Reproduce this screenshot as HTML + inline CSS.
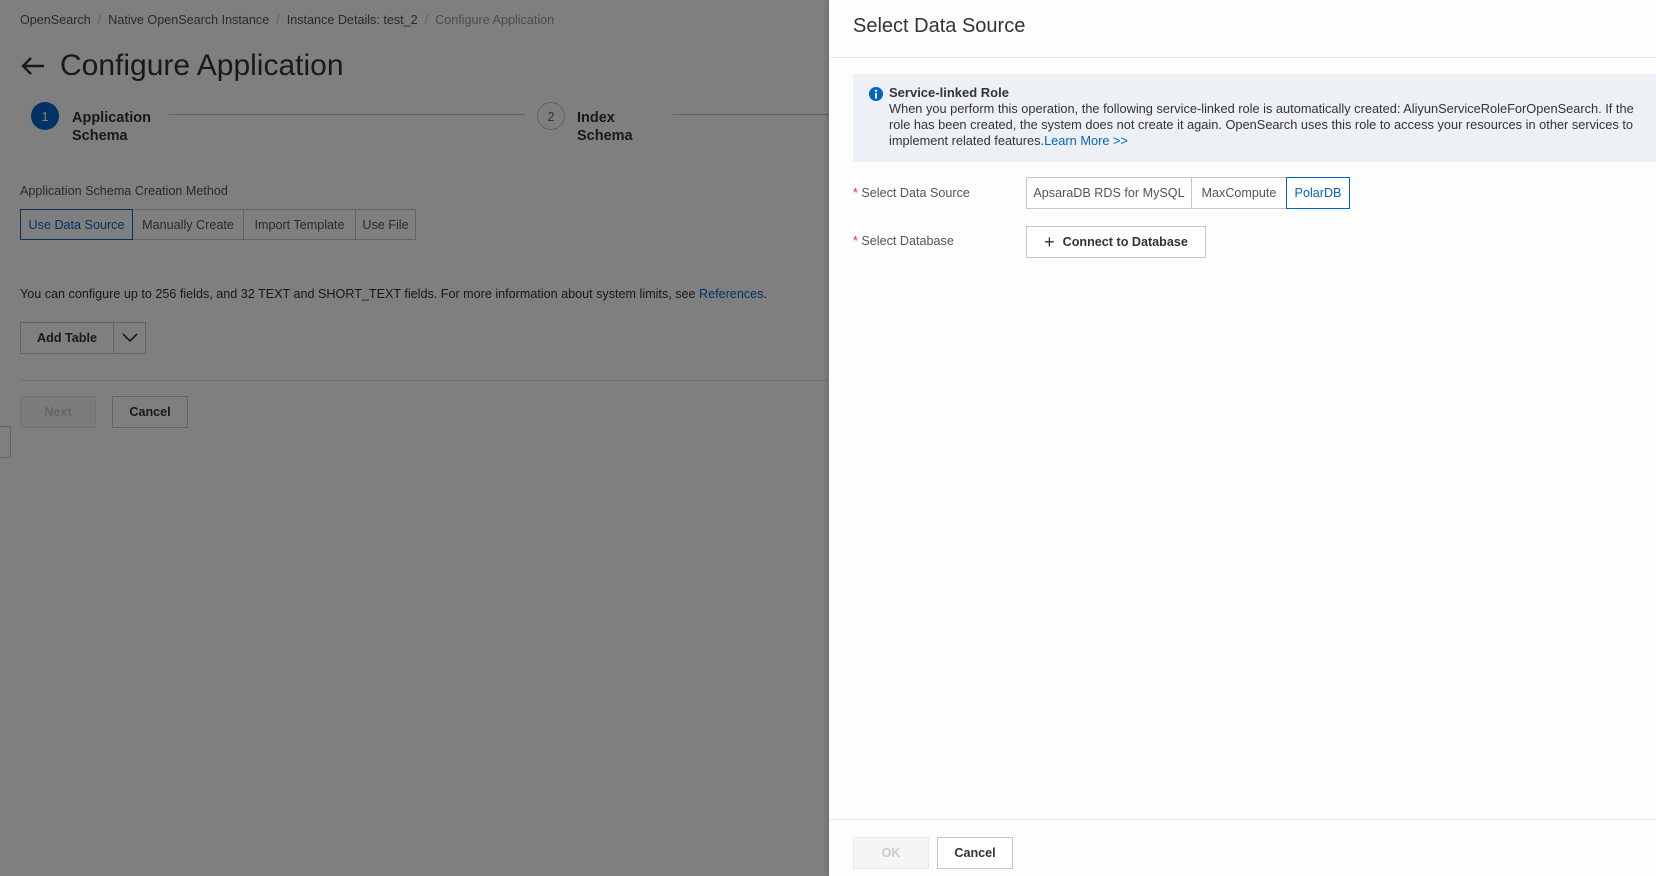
<!DOCTYPE html>
<html><head><meta charset="utf-8"><style>
*{box-sizing:border-box;margin:0;padding:0}
body{width:1656px;height:876px;overflow:hidden;position:relative;font-family:"Liberation Sans",sans-serif;background:#fff;color:#333}
.abs{position:absolute}
.bc{top:13px;left:20px;font-size:12.6px;color:#555;white-space:nowrap}
.bc span.s{color:#bbb;margin:0 7px}
.btn{position:absolute;border:1px solid #c4c6cf;background:#fff;font-size:12.6px;display:flex;align-items:center;justify-content:center;color:#333;white-space:nowrap}
.overlay{position:absolute;left:0;top:0;width:829px;height:876px;background:rgba(0,0,0,0.5);z-index:5}
.panel{position:absolute;left:829px;top:0;width:827px;height:876px;background:#fdfdfd;box-shadow:-2px 0 4px rgba(0,0,0,.15);z-index:6}
</style></head><body>
<div class="abs bc">OpenSearch<span class="s">/</span>Native OpenSearch Instance<span class="s">/</span>Instance Details: test_2<span class="s">/</span><span style="color:#999">Configure Application</span></div>
<svg class="abs" style="left:20px;top:55px" width="26" height="22" viewBox="0 0 26 22"><path d="M24 11H3M11 3L3 11l8 8" stroke="#333" stroke-width="2.4" fill="none"/></svg>
<div class="abs" style="left:60px;top:49px;font-size:30px;color:#333">Configure Application</div>
<div class="abs" style="left:31px;top:102px;width:28px;height:28px;border-radius:50%;background:#0064c8;color:#fff;font-size:13px;display:flex;align-items:center;justify-content:center">1</div>
<div class="abs" style="left:72px;top:109px;font-size:14.5px;font-weight:bold;line-height:18px;color:#333">Application<br>Schema</div>
<div class="abs" style="left:169px;top:114px;width:356px;height:1px;background:#c4c6cf"></div>
<div class="abs" style="left:537px;top:102px;width:28px;height:28px;border-radius:50%;border:1px solid #c4c6cf;color:#666;font-size:13px;display:flex;align-items:center;justify-content:center">2</div>
<div class="abs" style="left:577px;top:109px;font-size:14.5px;font-weight:bold;line-height:18px;color:#333">Index<br>Schema</div>
<div class="abs" style="left:673px;top:114px;width:160px;height:1px;background:#c4c6cf"></div>
<div class="abs" style="left:20px;top:184px;font-size:12.6px;color:#555">Application Schema Creation Method</div>
<div class="btn" style="left:20px;top:209px;width:113px;height:31px;border-color:#0064c8;color:#0064c8;z-index:1">Use Data Source</div>
<div class="btn" style="left:132px;top:209px;width:112px;height:31px;color:#555">Manually Create</div>
<div class="btn" style="left:243px;top:209px;width:113px;height:31px;color:#555">Import Template</div>
<div class="btn" style="left:355px;top:209px;width:61px;height:31px;color:#555">Use File</div>
<div class="abs" style="left:20px;top:287px;font-size:12.6px;color:#333;white-space:nowrap">You can configure up to 256 fields, and 32 TEXT and SHORT_TEXT fields. For more information about system limits, see <span style="color:#0064c8">References</span>.</div>
<div class="btn" style="left:20px;top:322px;width:94px;height:32px;font-weight:bold">Add Table</div>
<div class="btn" style="left:113px;top:322px;width:33px;height:32px"><svg width="16" height="10"><path d="M1 1l7 7 7-7" stroke="#333" stroke-width="1.6" fill="none"/></svg></div>
<div class="abs" style="left:20px;top:380px;width:809px;height:1px;background:#e3e4e6"></div>
<div class="btn" style="left:20px;top:396px;width:76px;height:32px;background:#f7f7f7;border-color:#e6e7eb;color:#ccc;font-weight:bold">Next</div>
<div class="btn" style="left:112px;top:396px;width:76px;height:32px;font-weight:bold">Cancel</div>
<div class="abs" style="left:0;top:426px;width:11px;height:32px;border:1px solid #c4c6cf;border-left:none;background:#fff"></div>
<div class="overlay"></div>
<div class="panel">
<div class="abs" style="left:24px;top:15px;font-size:20px;color:#333">Select Data Source</div>
<div class="abs" style="left:0;top:57px;width:827px;height:1px;background:#e8e8e8"></div>
<div class="abs" style="left:24px;top:74px;width:803px;height:88px;background:#edf1f6"></div>
<svg class="abs" style="left:40px;top:87px" width="14" height="14"><circle cx="7" cy="7" r="7" fill="#0064c8"/><rect x="6" y="6" width="2" height="5.5" fill="#fff"/><circle cx="7" cy="3.8" r="1.2" fill="#fff"/></svg>
<div class="abs" style="left:60px;top:85px;font-size:13px;font-weight:bold;color:#333">Service-linked Role</div>
<div class="abs" style="left:60px;top:101px;width:760px;font-size:12.8px;line-height:16px;color:#333">When you perform this operation, the following service-linked role is automatically created: AliyunServiceRoleForOpenSearch. If the role has been created, the system does not create it again. OpenSearch uses this role to access your resources in other services to implement related features.<span style="color:#0064c8">Learn More &gt;&gt;</span></div>
<div class="abs" style="left:24px;top:186px;font-size:12.6px;color:#555"><span style="color:#d93026">*</span> Select Data Source</div>
<div class="btn" style="left:197px;top:177px;width:166px;height:32px;color:#555">ApsaraDB RDS for MySQL</div>
<div class="btn" style="left:362px;top:177px;width:96px;height:32px;color:#555">MaxCompute</div>
<div class="btn" style="left:457px;top:177px;width:64px;height:32px;border-color:#0064c8;color:#0064c8">PolarDB</div>
<div class="abs" style="left:24px;top:234px;font-size:12.6px;color:#555"><span style="color:#d93026">*</span> Select Database</div>
<div class="btn" style="left:197px;top:226px;width:180px;height:32px;font-weight:bold;color:#333"><span style="font-weight:normal;font-size:18px;margin-right:8px">+</span>Connect to Database</div>
<div class="abs" style="left:0;top:819px;width:827px;height:1px;background:#e8e8e8"></div>
<div class="btn" style="left:24px;top:837px;width:76px;height:32px;background:#f5f5f5;border-color:#e6e7eb;color:#ccc;font-weight:bold">OK</div>
<div class="btn" style="left:108px;top:837px;width:76px;height:32px;font-weight:bold">Cancel</div>
</div>
</body></html>
